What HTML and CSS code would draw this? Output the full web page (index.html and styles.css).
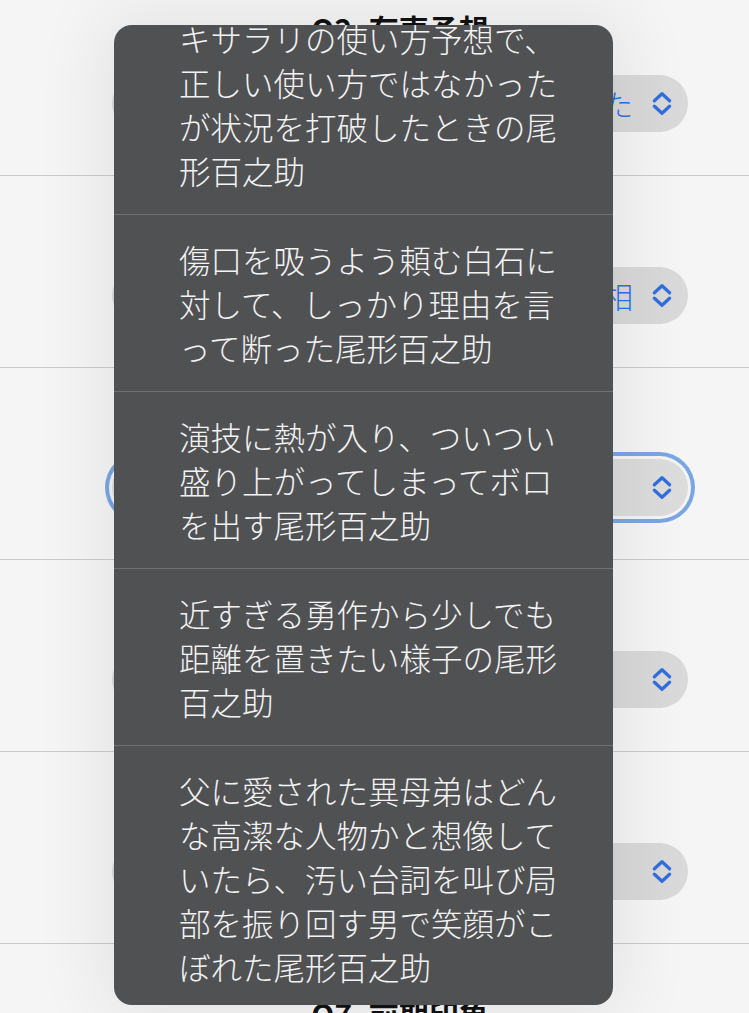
FILE: index.html
```html
<!DOCTYPE html>
<html lang="ja">
<head>
<meta charset="utf-8">
<title>アンケート</title>
<link rel="stylesheet" href="styles.css">
</head>
<body>
<div class="page">
  <form class="form">
    <div class="field first">
      <div class="q-title">Q2. 有声予想</div>
      <div class="select"><span class="value">正しい使い方ではなかった</span><svg class="chev" viewBox="0 0 20 23"><path d="M3 9 L10 2.5 L17 9 M3 14 L10 20.5 L17 14"/></svg></div>
    </div>
    <div class="field">
      <div class="q-title">Q3. 有声場面</div>
      <div class="select"><span class="value">白石の傷を吸う尾形の真相</span><svg class="chev" viewBox="0 0 20 23"><path d="M3 9 L10 2.5 L17 9 M3 14 L10 20.5 L17 14"/></svg></div>
    </div>
    <div class="field">
      <div class="q-title">Q4. 有声場面</div>
      <div class="select focused"><span class="value"></span><svg class="chev" viewBox="0 0 20 23"><path d="M3 9 L10 2.5 L17 9 M3 14 L10 20.5 L17 14"/></svg></div>
    </div>
    <div class="field">
      <div class="q-title">Q5. 有声場面</div>
      <div class="select"><span class="value"></span><svg class="chev" viewBox="0 0 20 23"><path d="M3 9 L10 2.5 L17 9 M3 14 L10 20.5 L17 14"/></svg></div>
    </div>
    <div class="field">
      <div class="q-title">Q6. 有声場面</div>
      <div class="select"><span class="value"></span><svg class="chev" viewBox="0 0 20 23"><path d="M3 9 L10 2.5 L17 9 M3 14 L10 20.5 L17 14"/></svg></div>
    </div>
    <div class="field last">
      <div class="q-title">Q7. 前期印象</div>
    </div>
  </form>

  <div class="picker" role="listbox">
    <ul class="options">
      <li class="option">キサラリの使い方予想で、<br>正しい使い方ではなかった<br>が状況を打破したときの尾<br>形百之助</li>
      <li class="option">傷口を吸うよう頼む白石に<br>対して、しっかり理由を言<br>って断った尾形百之助</li>
      <li class="option">演技に熱が入り、ついつい<br>盛り上がってしまってボロ<br>を出す尾形百之助</li>
      <li class="option">近すぎる勇作から少しでも<br>距離を置きたい様子の尾形<br>百之助</li>
      <li class="option">父に愛された異母弟はどん<br>な高潔な人物かと想像して<br>いたら、汚い台詞を叫び局<br>部を振り回す男で笑顔がこ<br>ぼれた尾形百之助</li>
    </ul>
  </div>
</div>
</body>
</html>
```

FILE: styles.css
```css
html, body {
  margin: 0;
  padding: 0;
}

body {
  width: 749px;
  height: 1013px;
  overflow: hidden;
  background: #f5f5f5;
  font-family: "Noto Sans CJK JP", "Noto Sans", sans-serif;
}

.page {
  position: relative;
  width: 749px;
  height: 1013px;
  overflow: hidden;
}

.form {
  margin: 0;
}

.field {
  padding: 51px 61px 43px 112px;
  border-bottom: 1px solid #cbcbcb;
}

.field.first {
  padding-top: 10px;
}

.field.last {
  border-bottom: none;
  padding-bottom: 0;
}

.q-title {
  height: 36px;
  line-height: 36px;
  font-size: 30px;
  font-weight: 700;
  color: #111;
  text-align: center;
  margin-bottom: 4px;
}

.field.first .q-title {
  margin-bottom: 29px;
}

.select {
  display: flex;
  align-items: center;
  justify-content: flex-end;
  height: 57px;
  border-radius: 29px;
  background: #d9d9d9;
  padding: 0 15px 0 24px;
  box-sizing: border-box;
  gap: 18px;
  overflow: hidden;
}

.select.focused {
  background: #dcdcdc;
  box-shadow: 0 0 0 3px #f4f4f4, 0 0 0 7px #7aa6e2;
  overflow: visible;
}

.value {
  flex: 1;
  min-width: 0;
  text-align: right;
  white-space: nowrap;
  overflow: hidden;
  direction: rtl;
  font-size: 30px;
  font-weight: 300;
  line-height: 57px;
  color: #306fdc;
}

.chev {
  flex: none;
  width: 22px;
  height: 25px;
}

.chev path {
  fill: none;
  stroke: #306fdc;
  stroke-width: 3;
  stroke-linecap: round;
  stroke-linejoin: round;
}

.picker {
  position: absolute;
  left: 114px;
  top: 25px;
  width: 499px;
  height: 980px;
  border-radius: 18px;
  background: #505153;
  overflow: hidden;
  box-shadow: 0 0 70px 14px rgba(0, 0, 0, 0.07);
}

.options {
  list-style: none;
  margin: -31px 0 0 0;
  padding: 0;
}

.option {
  padding: 22px 20px 22px 65px;
  font-size: 31.5px;
  font-weight: 300;
  line-height: 44px;
  color: #f3f3f3;
  white-space: nowrap;
  border-top: 1px solid #6f6f72;
}

.option:first-child {
  border-top: none;
}
```
